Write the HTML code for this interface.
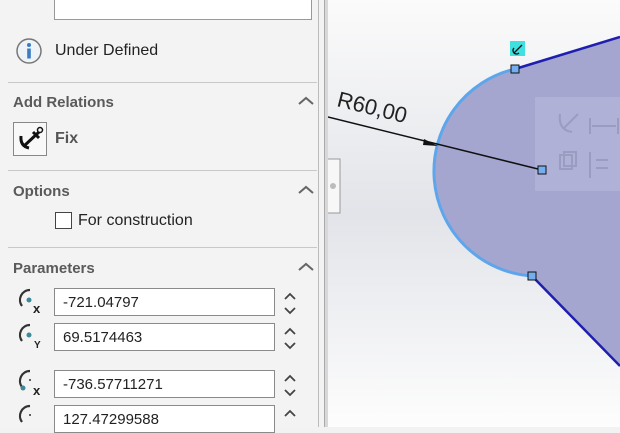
<!DOCTYPE html>
<html><head><meta charset="utf-8"><style>
*{margin:0;padding:0;box-sizing:border-box}
body{width:620px;height:427px;overflow:hidden;position:relative;font-family:"Liberation Sans",sans-serif;background:#f2f2f2}
.a{position:absolute}
.hd{position:absolute;left:13px;font-size:15px;font-weight:bold;color:#5a5a5a}
.sep{position:absolute;left:8px;width:309px;height:1px;background:#c8c8c8}
.chev{position:absolute;left:298px}
.inp{position:absolute;left:54px;width:221px;height:28px;border:1px solid #8a8a8a;background:#fff;font-size:15px;color:#222;padding:5px 0 0 8px}
.spin{position:absolute;left:282px;width:16px}
.lbl{font-size:16px;color:#222}
</style></head><body>
<div class="a" style="left:0;top:0;width:325px;height:427px;background:#f3f3f3"></div>
<div class="a" style="left:54px;top:-2px;width:258px;height:22px;border:1px solid #999;background:#fff"></div>
<svg class="a" style="left:14px;top:37px" width="30" height="30"><circle cx="15" cy="14" r="12" fill="#eef3f8" stroke="#777" stroke-width="1.5"/><circle cx="15" cy="8" r="2" fill="#3a7dc0"/><rect x="13.2" y="11.5" width="3.6" height="10" fill="#3a7dc0"/></svg>
<div class="a lbl" style="left:55px;top:42px">Under Defined</div>
<div class="sep" style="top:82px"></div>
<div class="hd" style="top:94px">Add Relations</div>
<svg class="chev" style="top:96px" width="16" height="10"><path d="M1 8 L8 2 L15 8" fill="none" stroke="#666" stroke-width="2"/></svg>
<div class="a" style="left:13px;top:122px;width:34px;height:34px;border:1px solid #888;background:#f8f8f8"></div>
<svg class="a" style="left:15px;top:124px" width="30" height="30"><path d="M6 12 Q5 22 14 24 M9 22 L24 8 M18 8 L24 14" fill="none" stroke="#111" stroke-width="3"/><circle cx="25" cy="6" r="2.5" fill="none" stroke="#111" stroke-width="1.5"/></svg>
<div class="a lbl" style="left:55px;top:130px;font-weight:bold;color:#555">Fix</div>
<div class="sep" style="top:170px"></div>
<div class="hd" style="top:183px">Options</div>
<svg class="chev" style="top:185px" width="16" height="10"><path d="M1 8 L8 2 L15 8" fill="none" stroke="#666" stroke-width="2"/></svg>
<div class="a" style="left:55px;top:212px;width:17px;height:17px;border:1px solid #444;background:#fff"></div>
<div class="a lbl" style="left:78px;top:212px">For construction</div>
<div class="sep" style="top:247px"></div>
<div class="hd" style="top:260px">Parameters</div>
<svg class="chev" style="top:262px" width="16" height="10"><path d="M1 8 L8 2 L15 8" fill="none" stroke="#666" stroke-width="2"/></svg>
<svg class="a" style="left:14px;top:286px" width="32" height="141" fill="none">
<g stroke="#333" stroke-width="2.2"><path d="M16 4 A10 10 0 0 0 8 20"/><path d="M16 39 A10 10 0 0 0 8 55"/><path d="M16 85 A10 10 0 0 0 8 101"/><path d="M16 120 A10 10 0 0 0 8 136"/></g>
<circle cx="15" cy="14" r="2.5" fill="#3b8a96"/><circle cx="15" cy="49" r="2.5" fill="#3b8a96"/><circle cx="9" cy="102" r="2.5" fill="#3b8a96"/><circle cx="16" cy="94" r="1" fill="#333"/><circle cx="16" cy="129" r="1" fill="#333"/>
<text x="19" y="27" font-family="Liberation Sans" font-weight="bold" font-size="13" fill="#222">x</text>
<text x="20" y="62" font-family="Liberation Sans" font-weight="bold" font-size="10" fill="#222">Y</text>
<text x="19" y="109" font-family="Liberation Sans" font-weight="bold" font-size="13" fill="#222">x</text>
</svg>
<div class="inp" style="top:288px">-721.04797</div>
<div class="inp" style="top:323px">69.5174463</div>
<div class="inp" style="top:370px">-736.57711271</div>
<div class="inp" style="top:405px">127.47299588</div>
<svg class="spin" style="top:290px" width="16" height="140" fill="none" stroke="#444" stroke-width="1.8"><path d="M3 9 L8 4 L13 9 M3 18 L8 23 L13 18 M3 44 L8 39 L13 44 M3 53 L8 58 L13 53 M3 91 L8 86 L13 91 M3 100 L8 105 L13 100 M3 126 L8 121 L13 126"/></svg>
<div class="a" style="left:318px;top:0;width:1px;height:427px;background:#bbb"></div>
<div class="a" style="left:324px;top:0;width:4px;height:427px;background:#d8d8d8;border-left:1px solid #aaa"></div>
<svg class="a" style="left:328px;top:0" width="292" height="427">
<defs><linearGradient id="g" x1="0" y1="0" x2="0" y2="1"><stop offset="0" stop-color="#fbfbfb"/><stop offset=".5" stop-color="#e2e4e9"/><stop offset="1" stop-color="#fdfdfd"/></linearGradient></defs>
<rect width="292" height="427" fill="url(#g)"/>
<path d="M187 69 A105 105 0 0 0 204 276 L292 365 L292 38 Z" fill="#a4a6cf"/>
<path d="M187 69 L292 37 M204 276 L292 366" stroke="#1e1eb0" stroke-width="2.5"/>
<path d="M187 69 A105 105 0 0 0 204 276" fill="none" stroke="#5ea6ec" stroke-width="3"/>
<rect x="207" y="97" width="85" height="94" fill="#b4b6d8" opacity=".7"/>
<path d="M0 117 L214 170" stroke="#111" stroke-width="1.5"/>
<path d="M110 146 L96 139 L95 145 Z" fill="#111"/>
<text x="8" y="106" transform="rotate(14 8 106)" font-family="Liberation Sans" font-size="22" fill="#222">R60,00</text>
<rect x="182" y="41" width="15" height="15" fill="#3fe0e0"/>
<path d="M186 53 L194 45 M186 48 A3 3 0 1 0 191 53" fill="none" stroke="#111" stroke-width="1.3"/>
<g fill="#74aef0" stroke="#111" stroke-width="1"><rect x="183" y="65" width="8" height="8"/><rect x="200" y="272" width="8" height="8"/><rect x="210" y="166" width="8" height="8"/></g>
<g stroke="#9a9cc0" stroke-width="2" fill="none"><path d="M232 114 Q230 130 244 132 M236 128 L250 114"/><path d="M262 118 L262 134 M290 118 L290 134 M264 126 L288 126"/><rect x="232" y="155" width="12" height="14"/><rect x="236" y="152" width="12" height="14"/><path d="M262 152 L262 178 M268 160 L280 160 M268 168 L280 168"/></g>
<rect x="-1" y="159" width="13" height="54" fill="#f7f7f7" stroke="#999"/>
<circle cx="5" cy="186" r="3" fill="#bbb"/>
</svg>
</body></html>
